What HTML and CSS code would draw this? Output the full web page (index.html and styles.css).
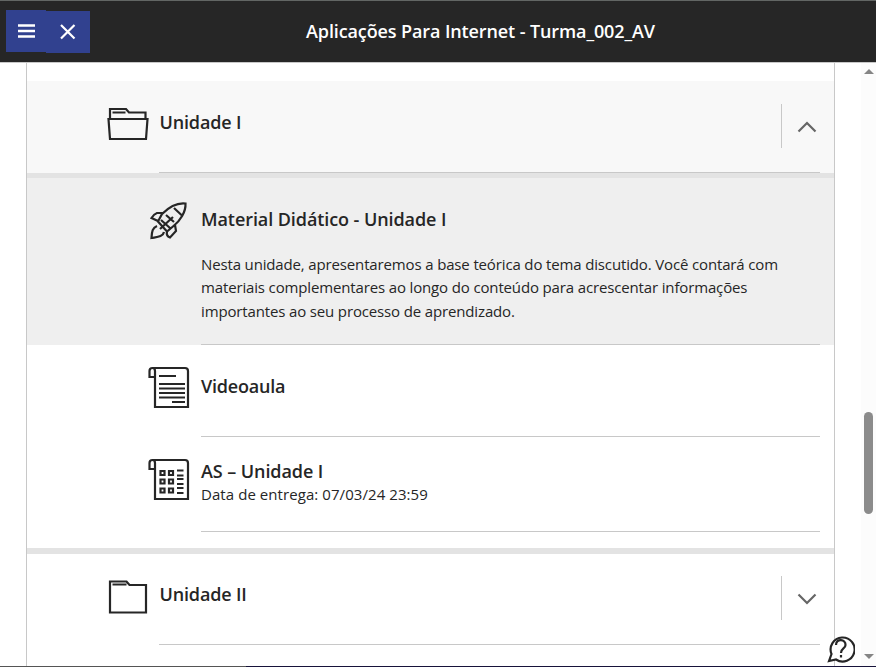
FILE: index.html
```html
<!DOCTYPE html>
<html lang="pt-BR">
<head>
<meta charset="utf-8">
<title>Aplicações Para Internet</title>
<link rel="stylesheet" href="styles.css">
</head>
<body>
<header class="topbar">
  <button class="nav-btn menu-btn" aria-label="Menu"><svg width="18" height="16" viewBox="0 0 18 16"><path d="M0 2.500h17M0 8h17M0 13.500h17"/></svg></button>
  <button class="nav-btn close-btn" aria-label="Fechar"><svg width="18" height="18" viewBox="0 0 18 18"><path d="M2 2l13.500 13.500M15.500 2L2 15.500"/></svg></button>
  <h1 class="course-title">Aplicações Para Internet - Turma_002_AV</h1>
</header>
<main class="viewport">
  <section class="outline">
    <div class="folder open">
      <svg class="icon" width="42" height="36" viewBox="0 0 42 36"><path d="M3 12V3h16l3 3.500h16.500V12M5.500 6.500h13M1.500 13h39l-1.500 20H3z"/></svg>
      <h2 class="name">Unidade I</h2>
      <button class="toggle" aria-label="Recolher"><svg width="20" height="12" viewBox="0 0 20 12"><path d="M1.500 10.500L10 2l8.500 8.500"/></svg></button>
    </div>
    <article class="item material">
      <svg class="icon" width="42" height="42" viewBox="0 0 42 42"><path d="M14 14C20 8 29 2.500 37.500 3.500C38 12 32 21 25.500 26L19 31.500L10 21.500ZM26 8L34.500 16M16 13H9Q6 14 3.500 18L10 21M27 25L28 31L22 37.500Q18 36 19 31.500M9 26C4 28 4 32 3.500 38C9 37 15 37 16 32M12 29L25 17M13 20L22 28M18 15L26 22"/></svg>
      <div class="body">
        <h3 class="name">Material Didático - Unidade I</h3>
        <p class="desc"><span>Nesta unidade, apresentaremos a base teórica do tema discutido. Você contará com</span><br><span>materiais complementares ao longo do conteúdo para acrescentar informações</span><br><span>importantes ao seu processo de aprendizado.</span></p>
      </div>
    </article>
    <article class="item video">
      <svg class="icon" width="42" height="43" viewBox="0 0 42 43"><path d="M7 11H1.500V5Q1.500 2 4.500 2H37Q40 2 40 5V41H7V5Q7 2 4.500 2M11 10h17M11 18h26M11 22.500h26M11 27h26M11 31.500h26M24 36h13"/></svg>
      <div class="body"><h3 class="name">Videoaula</h3></div>
    </article>
    <article class="item test">
      <svg class="icon" width="42" height="43" viewBox="0 0 42 43"><path d="M7 11H1.500V5Q1.500 2 4.500 2H37Q40 2 40 5V41H7V5Q7 2 4.500 2M12.500 13h4v4h-4zM21 13h4v4h-4zM12.500 21.500h4v4h-4zM21 21.500h4v4h-4zM12.500 30.500h4v4h-4zM21 30.500h4v4h-4zM29 12.500h6.500M29 17.500h6.500M29 21h6.500M29 26h6.500M29 30h6.500M29 35h6.500"/></svg>
      <div class="body"><h3 class="name">AS – Unidade I</h3><p class="due">Data de entrega: 07/03/24 23:59</p></div>
    </article>
    <div class="folder closed">
      <svg class="icon" width="42" height="36" viewBox="0 0 42 36"><path d="M3 2.500h16.500l3 3.500H39v27.500H3zM5.500 5.500h14"/></svg>
      <h2 class="name">Unidade II</h2>
      <button class="toggle" aria-label="Expandir"><svg width="20" height="12" viewBox="0 0 20 12"><path d="M1.500 1.500L10 10l8.500-8.500"/></svg></button>
    </div>
  </section>
  <div class="scrollbar"><i class="arrow-up"></i><i class="thumb"></i><i class="arrow-down"></i></div>
</main>
<div class="bottom-edge"></div>
<button class="help" aria-label="Ajuda"><svg width="28" height="28" viewBox="0 0 28 28"><path class="bubble" d="M2 26l2.500-7A12 12 0 1 1 9 24.500z"/><path d="M9 10c0-7 10-6 9.500 0c0 4-4.500 3-4.500 8M14 20v2.500"/></svg></button>
</body>
</html>
```
FILE: styles.css
```css
* { box-sizing: border-box; }
body {
  margin: 0;
  height: 667px;
  overflow: hidden;
  display: flex;
  flex-direction: column;
  background: #fff;
  color: #262626;
  font-family: "Open Sans", "Noto Sans", sans-serif;
}
h1, h2, h3, p { margin: 0; }
button { border: 0; padding: 0; background: none; }
svg { display: block; fill: none; stroke: #262626; stroke-width: 2.2; }

.topbar {
  flex: none;
  height: 63px;
  display: flex;
  align-items: flex-start;
  padding-left: 6px;
  background: #262626;
  border-top: 1px solid #626664;
  border-bottom: 1px solid #c8c8c8;
}
.nav-btn { height: 42px; display: flex; align-items: center; background: #31418f; }
.nav-btn svg { stroke: #fff; }
.menu-btn { width: 40px; margin-top: 9px; padding-left: 12px; }
.menu-btn svg { stroke-width: 2.6; }
.close-btn { width: 44px; margin-top: 10px; padding-left: 13px; }
.course-title {
  margin: 17px 0 0 216px;
  font-size: 18px;
  line-height: 26px;
  font-weight: 600;
  letter-spacing: -0.11px;
  color: #fff;
  white-space: nowrap;
}

.viewport { flex: 1; min-height: 0; display: flex; justify-content: space-between; overflow: hidden; }
.outline {
  width: 809px;
  height: 604px;
  flex: none;
  margin-left: 26px;
  padding-top: 18px;
  border: solid #c8c8c8;
  border-width: 0 1px;
}
.name { font-size: 18px; line-height: 26px; font-weight: 600; letter-spacing: -0.08px; white-space: nowrap; }

.folder { display: flex; align-items: flex-start; padding-left: 80px; }
.folder .name {
  flex: 1;
  height: 92px;
  margin: 0 0 0 10px;
  padding-top: 28px;
  border-bottom: 1px solid #c8c8c8;
  letter-spacing: -0.15px;
  text-indent: 0.5px;
}
.folder .icon { margin-top: 25px; }
.folder.open { height: 97px; background: #f8f8f8; border-bottom: 5px solid #e3e3e3; }
.folder.closed { border-top: 6px solid #e3e3e3; }
.folder.closed .name, .folder.closed .toggle { height: 91px; }
.folder.closed .name { padding-top: 27px; }
.toggle {
  width: 53px;
  height: 92px;
  padding: 0 2px 0 0;
  display: flex;
  align-items: center;
  justify-content: center;
  background: linear-gradient(#c8c8c8, #c8c8c8) 0 23px / 1px 44px no-repeat;
  position: relative;
}
.toggle svg { stroke: #666; }
.folder.closed .toggle { padding-bottom: 2px; background-position: 0 22px; }
.toggle::after { content: ""; position: absolute; left: 0; right: 14px; bottom: 0; height: 1px; background: #c8c8c8; }

.item { display: flex; align-items: flex-start; padding: 0 14px 0 121px; }
.item .body { flex: 1; margin-left: 11px; border-bottom: 1px solid #c8c8c8; }
.material { height: 167px; background: #efefef; }
.material .icon { margin-top: 22px; }
.material .body { height: 167px; padding-top: 28px; }
.desc { margin-top: 21px; font-size: 15px; line-height: 23.400px; letter-spacing: -0.145px; white-space: nowrap; }
.video .icon { margin-top: 21px; }
.video .body { height: 92px; padding-top: 28px; }
.video .name { letter-spacing: -0.2px; }
.test { height: 111px; }
.test .icon { margin-top: 21px; }
.test .body { height: 95px; padding-top: 21px; }
.due { font-size: 15px; line-height: 20px; letter-spacing: 0.07px; }

.scrollbar { width: 15px; display: flex; flex-direction: column; align-items: center; background: #fcfcfc; }
.arrow-up, .arrow-down { border: 5px solid transparent; }
.arrow-up { margin-top: 1px; border-bottom-color: #858585; }
.thumb { width: 9px; height: 102px; margin-top: 338px; border-radius: 5px; background: #8b8b8b; }
.arrow-down { margin-top: 140px; border-top-color: #858585; }

.bottom-edge { flex: none; height: 1px; background: linear-gradient(90deg, #555 246px, #17133a 246px); }
.help { position: absolute; left: 827px; top: 635px; }
.help .bubble { fill: #fff; }
```
